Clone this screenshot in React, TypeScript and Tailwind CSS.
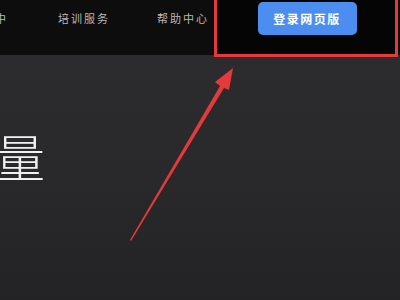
import React from "react";

export default function App() {
  return (
    <div className="relative w-[400px] h-[300px] overflow-hidden bg-[#2a2a2c]" style={{ fontFamily: '"Noto Sans CJK SC", sans-serif' }}>
      <div className="h-[55px] bg-[#0d0d0d] flex items-start">
        <div className="flex items-center h-[36px] text-[11px] text-[#b8b8b8] tracking-[2px]">
          <span className="ml-[-5px]">中</span>
          <span className="ml-[50px]">培训服务</span>
          <span className="ml-[47px]">帮助中心</span>
        </div>
        <div className="ml-auto mr-[3px] w-[182px] h-[55px] bg-[#050505] flex justify-center pt-[2px]">
          <div className="ml-[2px] w-[99px] h-[33px] rounded-[5px] bg-[#4c8ef0] text-white text-[12px] font-bold tracking-[1.5px] flex items-center justify-center">
            登录网页版
          </div>
        </div>
      </div>
      <div className="relative h-[245px] bg-gradient-to-b from-[#2c2c2e] via-[#29292b] to-[#232325]">
        <div className="pt-[75px] ml-[-5px] text-[50px] leading-none text-[#f0f0f0] font-light">量</div>
      </div>
      <div className="absolute left-[214px] top-[-3px] w-[184px] h-[60px] border-[3px] border-[#e5393b]" />
      <svg className="absolute left-0 top-0" width="400" height="300">
        <polygon points="130,240 220,86 215,82 233,68 229,90 224,88 131,241" fill="#e5393b" />
      </svg>
    </div>
  );
}
